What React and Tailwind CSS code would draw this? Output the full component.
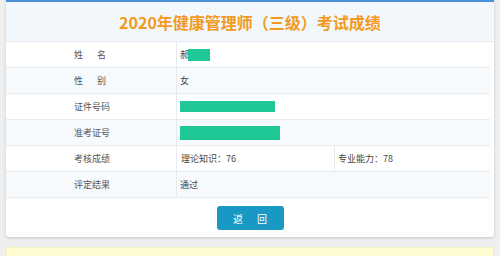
import React from 'react';

const Label = ({ children }) => (
  <div className="w-[170px] shrink-0 pl-[68px] flex items-center text-[#555]">{children}</div>
);

const Mask = ({ w }) => <span className={`inline-block h-[12px] bg-[#1fc896] ${w}`}></span>;

export default function App() {
  const rows = [
    { label: <span className="flex gap-[14px]"><span>姓</span><span>名</span></span>, value: <span className="flex items-center">郝<span className="inline-block w-[22px] h-[12px] bg-[#1fc896] -ml-[1px]"></span></span> },
    { label: <span className="flex gap-[14px]"><span>性</span><span>别</span></span>, value: '女' },
    { label: '证件号码', value: <span className="inline-block w-[95px] h-[11px] bg-[#1fc896]"></span> },
    { label: '准考证号', value: <span className="inline-block w-[100px] h-[14px] bg-[#1fc896]"></span> },
    { label: '考核成绩', score: true },
    { label: '评定结果', value: '通过' },
  ];

  return (
    <div className="w-[500px] h-[256px] bg-[#efefef] overflow-hidden px-[6px] text-[9px]" style={{ fontFamily: '"Noto Sans CJK SC", "Noto Sans", sans-serif' }}>
      {/* Score card */}
      <div className="bg-white border-t-2 border-[#4a8fd8] shadow-[0_1px_3px_rgba(0,0,0,0.18)] rounded-b-[3px] pb-[7px]">
        <div className="h-[40px] bg-[#f2f7fc] border-b border-[#e3eaf2] flex items-center justify-center">
          <h1 className="text-[16px] font-bold text-[#f39a1e] leading-none">2020年健康管理师（三级）考试成绩</h1>
        </div>
        <div className="mr-[4px]">
          {rows.map((r, i) => (
            <div key={i} className={`h-[26px] flex border-b border-[#e6ebf0] ${i % 2 ? 'bg-[#f7fafd]' : 'bg-white'}`}>
              <Label>{r.label}</Label>
              {r.score ? (
                <div className="flex-1 flex border-l border-[#e6ebf0] text-[#444]">
                  <div className="w-[158px] pl-[4px] flex items-center border-r border-[#e6ebf0]">理论知识：76</div>
                  <div className="flex-1 pl-[3px] flex items-center">专业能力：78</div>
                </div>
              ) : (
                <div className="flex-1 pl-[3px] flex items-center border-l border-[#e6ebf0] text-[#444]">{r.value}</div>
              )}
            </div>
          ))}
        </div>
        <div className="flex justify-center pt-[8px]">
          <button className="w-[67px] h-[24px] bg-[#1a98c4] rounded-[3px] text-white text-[10px] flex items-center justify-center gap-[14px]">
            <span>返</span><span>回</span>
          </button>
        </div>
      </div>
      <div className="mt-[10px] h-[20px] bg-[#fffbd0] border border-[#f3efc0]"></div>
    </div>
  );
}
